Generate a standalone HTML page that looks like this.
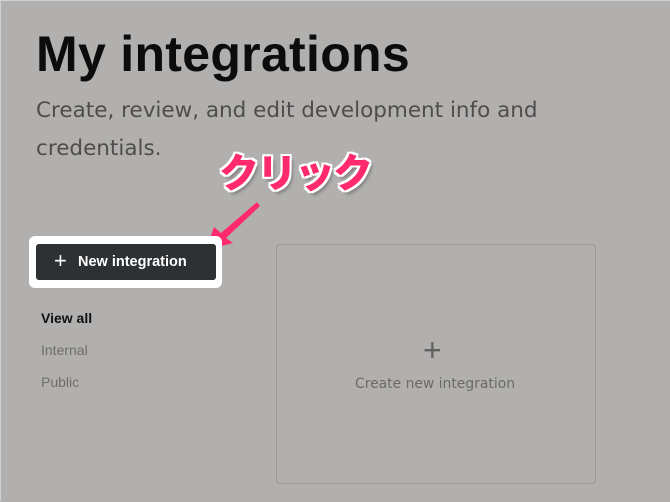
<!DOCTYPE html><html><head><style>
body{margin:0;width:670px;height:501px;background:#b1b0ae;position:relative;overflow:hidden;font-family:"Liberation Sans",sans-serif;border-top:1px solid #d0d0d0;border-left:1px solid #d0d0d0;box-sizing:border-box}
div,span{position:absolute;white-space:nowrap}
</style></head><body>
<div style="left:35px;top:24px;font-size:50px;font-weight:bold;color:#0c0c0c;letter-spacing:0.3px">My integrations</div>
<div style="left:35px;top:91px;font-family:'DejaVu Sans',sans-serif;font-size:21.5px;color:#4e4d4c;line-height:38px">Create, review, and edit development info and<br>credentials.</div>
<div style="left:218px;top:140px;font-family:'Noto Sans CJK JP',sans-serif;font-size:40px;font-weight:900;color:#ff2a6d;text-shadow:2px 0 #fff,-2px 0 #fff,0 2px #fff,0 -2px #fff,2px 2px #fff,-2px -2px #fff,2px -2px #fff,-2px 2px #fff,3px 4px 3px rgba(0,0,0,.3);letter-spacing:-2px">クリック</div>
<svg style="position:absolute;left:0;top:0" width="670" height="501"><polygon points="205,249 213,226 220,232 256,201 259,205 225,237 232,242" fill="#ff2a6d"/></svg>
<div style="left:28px;top:235px;width:193px;height:52px;background:#fff;border-radius:6px"></div>
<div style="left:35px;top:243px;width:180px;height:36px;background:#2e3133;border-radius:3px;color:#fff;font-size:14.5px;font-weight:bold;line-height:36px"><span style="left:18px;top:-1px;font-size:22px;font-weight:normal">+</span><span style="left:42px">New integration</span></div>
<div style="left:40px;top:309px;font-size:14px;font-weight:bold;color:#111">View all</div>
<div style="left:40px;top:341px;font-size:14px;color:#6e6d6b">Internal</div>
<div style="left:40px;top:373px;font-size:14px;color:#6e6d6b">Public</div>
<div style="left:275px;top:243px;width:318px;height:238px;border:1px solid #9c9b99;border-radius:4px"></div>
<div style="left:422px;top:331px;font-size:32px;color:#626160;font-weight:300">+</div>
<div style="left:354px;top:375px;font-family:'DejaVu Sans',sans-serif;font-size:13.9px;color:#6b6a69">Create new integration</div>
</body></html>
